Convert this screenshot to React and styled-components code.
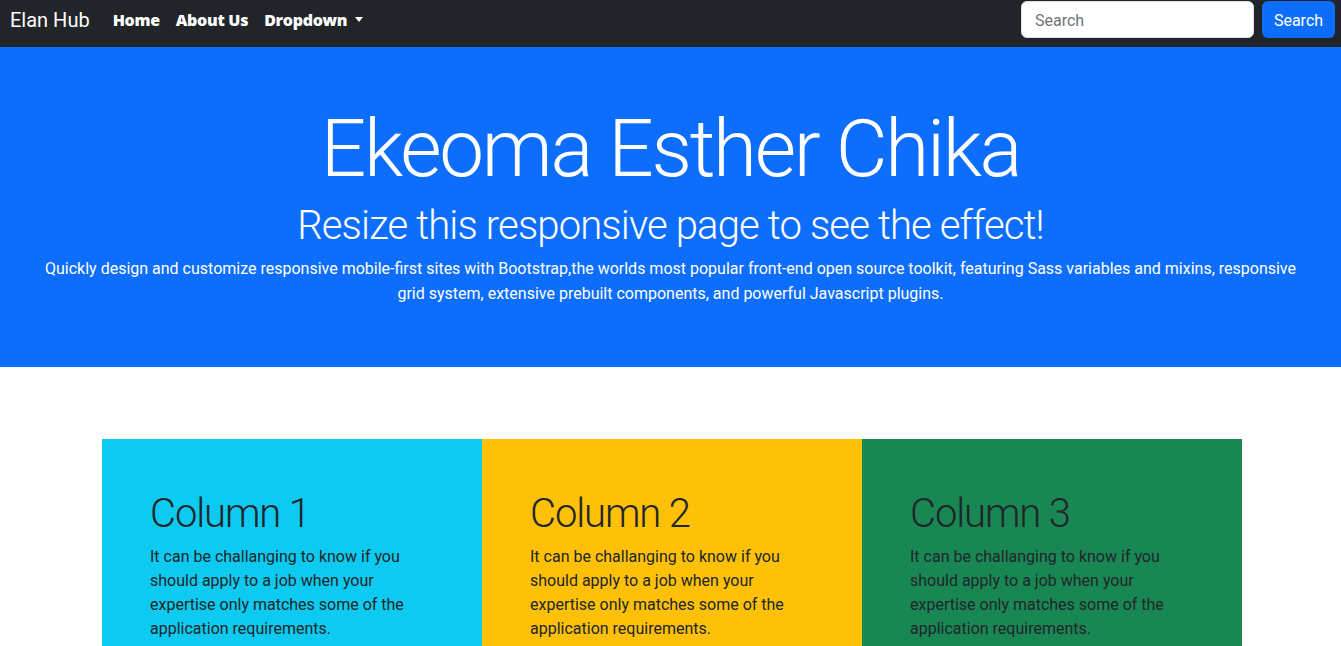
import React from 'react';
import styled, { createGlobalStyle } from 'styled-components';

const GlobalStyle = createGlobalStyle`
  *, *::before, *::after { box-sizing: border-box; }
  body {
    margin: 0;
    font-family: Roboto, "Liberation Sans", sans-serif;
    font-size: 16px;
    line-height: 1.5;
    color: #212529;
    background: #fff;
  }
`;

const Navbar = styled.nav`
  display: flex;
  align-items: center;
  justify-content: space-between;
  height: 47px;
  padding: 1px 6px 9px 10px;
  background: #212529;
`;

const NavLeft = styled.div`
  display: flex;
  align-items: center;
`;

const Brand = styled.a`
  font-size: 20px;
  line-height: 1.5;
  color: #fff;
  margin-right: 15px;
  text-decoration: none;
`;

const NavList = styled.ul`
  display: flex;
  list-style: none;
  margin: 0;
  padding: 0;
`;

const NavLink = styled.a`
  display: flex;
  align-items: center;
  padding: 8px;
  color: #fff;
  font-family: "Open Sans", Roboto, sans-serif;
  font-weight: 800;
  letter-spacing: -0.3px;
  text-decoration: none;
`;

const Caret = styled.span`
  display: inline-block;
  margin-left: 8px;
  border-top: 5px solid #fff;
  border-left: 4.5px solid transparent;
  border-right: 4.5px solid transparent;
`;

const SearchForm = styled.form`
  display: flex;
  gap: 8px;
`;

const SearchInput = styled.input`
  width: 233px;
  height: 37px;
  padding: 7px 13px 5px;
  border: 1px solid #dee2e6;
  border-radius: 6px;
  font: inherit;
  color: #212529;
  background: #fff;
  &::placeholder { color: #6c757d; }
`;

const SearchButton = styled.button`
  width: 73px;
  height: 37px;
  padding: 2px 0 0;
  border: none;
  border-radius: 6px;
  background: #0d6efd;
  color: #fff;
  font: inherit;
`;

const Hero = styled.header`
  background: #0d6efd;
  color: #fff;
  text-align: center;
  padding: 48px 40px;
`;

const Title = styled.h1`
  font-size: 80px;
  font-weight: 300;
  line-height: 1.2;
  letter-spacing: -2.3px;
  padding-top: 6px;
  margin: 0 0 2px;
`;

const Subtitle = styled.h2`
  font-size: 40px;
  font-weight: 300;
  line-height: 1.2;
  letter-spacing: -0.85px;
  padding-top: 3px;
  margin: 0 0 5px;
`;

const Lead = styled.p`
  line-height: 25px;
  padding-top: 1px;
  margin: 0 0 13px;
`;

const Section = styled.section`
  padding: 72px 0 0 3px;
`;

const Container = styled.div`
  width: 1140px;
  margin: 0 auto;
  display: grid;
  grid-template-columns: repeat(3, 1fr);
`;

const Column = styled.div`
  background: ${(p) => p.$bg};
  padding: 48px;
`;

const ColTitle = styled.h2`
  font-size: 40px;
  font-weight: 300;
  line-height: 1.2;
  letter-spacing: -1.1px;
  padding-top: 3px;
  margin: 0 0 5px;
`;

const ColText = styled.p`
  padding-top: 2px;
  margin: 0 0 14px;
`;

const columns = [
  { title: 'Column 1', bg: '#0dcaf0' },
  { title: 'Column 2', bg: '#ffc107' },
  { title: 'Column 3', bg: '#198754' },
];

export default function App() {
  return (
    <>
      <GlobalStyle />
      <Navbar>
        <NavLeft>
          <Brand href="#">Elan Hub</Brand>
          <NavList>
            <li><NavLink href="#">Home</NavLink></li>
            <li><NavLink href="#">About Us</NavLink></li>
            <li><NavLink href="#">Dropdown<Caret /></NavLink></li>
          </NavList>
        </NavLeft>
        <SearchForm onSubmit={(e) => e.preventDefault()}>
          <SearchInput type="search" placeholder="Search" />
          <SearchButton type="submit">Search</SearchButton>
        </SearchForm>
      </Navbar>
      <Hero>
        <Title>Ekeoma Esther Chika</Title>
        <Subtitle>Resize this responsive page to see the effect!</Subtitle>
        <Lead>
          Quickly design and customize responsive mobile-first sites with Bootstrap,the worlds most popular front-end open source toolkit, featuring Sass variables and mixins, responsive grid system, extensive prebuilt components, and powerful Javascript plugins.
        </Lead>
      </Hero>
      <Section>
        <Container>
          {columns.map((c) => (
            <Column key={c.title} $bg={c.bg}>
              <ColTitle>{c.title}</ColTitle>
              <ColText>
                It can be challanging to know if you should apply to a job when your expertise only matches some of the application requirements.
              </ColText>
            </Column>
          ))}
        </Container>
      </Section>
    </>
  );
}
